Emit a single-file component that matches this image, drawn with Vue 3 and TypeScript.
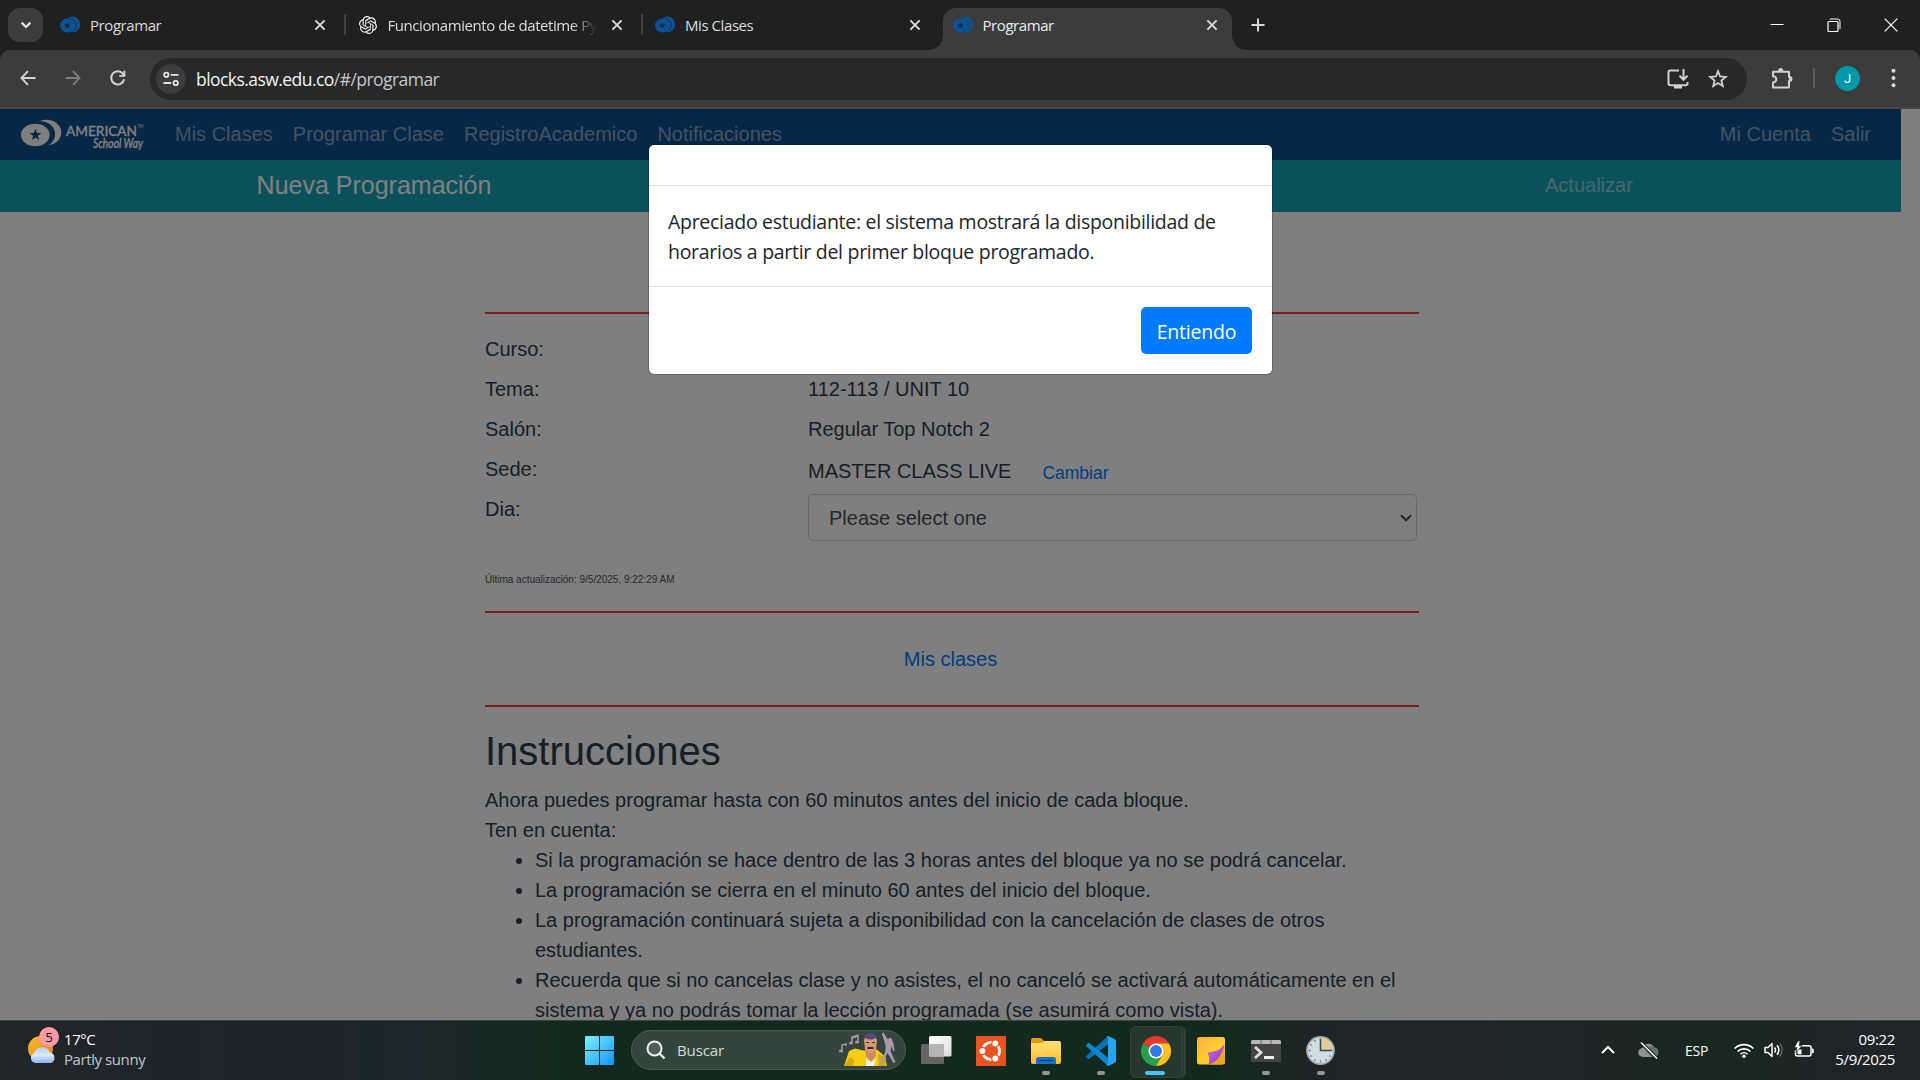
<script setup lang="ts">
interface Tab {
  title: string
  icon: 'asw' | 'gpt'
  active?: boolean
  divider?: boolean
}

const tabs: Tab[] = [
  { title: 'Programar', icon: 'asw', divider: true },
  { title: 'Funcionamiento de datetime Py', icon: 'gpt', divider: true },
  { title: 'Mis Clases', icon: 'asw' },
  { title: 'Programar', icon: 'asw', active: true },
]

const instructions: string[] = [
  'Si la programación se hace dentro de las 3 horas antes del bloque ya no se podrá cancelar.',
  'La programación se cierra en el minuto 60 antes del inicio del bloque.',
  'La programación continuará sujeta a disponibilidad con la cancelación de clases de otros estudiantes.',
  'Recuerda que si no cancelas clase y no asistes, el no canceló se activará automáticamente en el sistema y ya no podrás tomar la lección programada (se asumirá como vista).',
]
</script>

<template>
  <div class="screen">
    <header class="tabstrip">
      <button class="tab-search">
        <svg width="12" height="12" viewBox="0 0 12 12"><path d="M1.6 3.6 6 8l4.4-4.4" fill="none" stroke="#e8e8e8" stroke-width="2.2" /></svg>
      </button>
      <div v-for="(tab, i) in tabs" :key="i" class="tab" :class="{ active: tab.active, divider: tab.divider }">
        <svg v-if="tab.icon === 'asw'" class="favicon" width="20" height="18" viewBox="0 0 20 18">
          <ellipse cx="12.6" cy="8.4" rx="7.4" ry="7.9" fill="#0e5296" />
          <ellipse cx="9.4" cy="9.2" rx="7.2" ry="7.1" :fill="tab.active ? '#2b4258' : '#182f44'" />
          <ellipse cx="7.8" cy="9.5" rx="7.8" ry="6.9" fill="#0e5296" />
          <path d="m7.3 6.2.9 2.3 2.4.1-1.9 1.5.7 2.3-2.1-1.3-2 1.3.6-2.3L4 8.600l2.400-.1z" fill="#12253c" />
        </svg>
        <svg v-else class="favicon" width="18" height="18" viewBox="0 0 24 24">
          <path fill="#f1f1f1" d="M22.2819 9.8211a5.9847 5.9847 0 0 0-.5157-4.9108 6.0462 6.0462 0 0 0-6.5098-2.9A6.0651 6.0651 0 0 0 4.9807 4.1818a5.9847 5.9847 0 0 0-3.9977 2.9 6.0462 6.0462 0 0 0 .7427 7.0966 5.98 5.98 0 0 0 .511 4.9107 6.051 6.051 0 0 0 6.5146 2.9001A5.9847 5.9847 0 0 0 13.2599 24a6.0557 6.0557 0 0 0 5.7718-4.2058 5.9894 5.9894 0 0 0 3.9977-2.9001 6.0557 6.0557 0 0 0-.7475-7.0729zm-9.022 12.6081a4.4755 4.4755 0 0 1-2.8764-1.0408l.1419-.0804 4.7783-2.7582a.7948.7948 0 0 0 .3927-.6813v-6.7369l2.02 1.1686a.071.071 0 0 1 .038.0615v5.5826a4.504 4.504 0 0 1-4.4945 4.4944zm-9.6607-4.1254a4.4708 4.4708 0 0 1-.5346-3.0137l.142.0852 4.783 2.7582a.7712.7712 0 0 0 .7806 0l5.8428-3.3685v2.3324a.0804.0804 0 0 1-.0332.0615L9.74 19.9502a4.4992 4.4992 0 0 1-6.1408-1.6464zM2.3408 7.8956a4.485 4.485 0 0 1 2.3655-1.9728V11.6a.7664.7664 0 0 0 .3879.6765l5.8144 3.3543-2.0201 1.1685a.0757.0757 0 0 1-.071 0l-4.8303-2.7865A4.504 4.504 0 0 1 2.3408 7.872zm16.5963 3.8558L13.1038 8.364 15.1192 7.2a.0757.0757 0 0 1 .071 0l4.8303 2.7913a4.4944 4.4944 0 0 1-.6765 8.1042v-5.6772a.79.79 0 0 0-.407-.667zm2.0107-3.0231l-.142-.0852-4.7735-2.7818a.7759.7759 0 0 0-.7854 0L9.409 9.2297V6.8974a.0662.0662 0 0 1 .0284-.0615l4.8303-2.7866a4.4992 4.4992 0 0 1 6.6802 4.66zM8.3065 12.863l-2.02-1.1638a.0804.0804 0 0 1-.038-.0567V6.0742a4.4992 4.4992 0 0 1 7.3757-3.4537l-.142.0805L8.704 5.459a.7948.7948 0 0 0-.3927.6813zm1.0976-2.3654l2.602-1.4998 2.6069 1.4998v2.9994l-2.5974 1.4997-2.6067-1.4997Z" />
        </svg>
        <span class="tab-title" :class="{ fade: tab.icon === 'gpt' }">{{ tab.title }}</span>
        <svg class="tab-close" width="12" height="12" viewBox="0 0 12 12"><path d="m1.400 1.400 9.200 9.200M10.600 1.400l-9.200 9.200" stroke="currentColor" stroke-width="1.900" /></svg>
      </div>
      <svg class="new-tab" width="14" height="14" viewBox="0 0 14 14"><path d="M7 .5v13M.5 7h13" stroke="#d6d6d6" stroke-width="2" /></svg>
      <div class="window-buttons">
        <span><svg width="14" height="14" viewBox="0 0 14 14"><path d="M.5 6.500h13" stroke="#fff" /></svg></span>
        <span><svg width="14" height="14" viewBox="0 0 14 14"><path d="M3 1.500V1h7.500A2.500 2.500 0 0 1 13 3.500V11" fill="none" stroke="#fff" /><rect x="1" y="3.500" width="10" height="10" rx="1" fill="none" stroke="#fff" stroke-width="1.200" /></svg></span>
        <span><svg width="14" height="14" viewBox="0 0 14 14"><path d="m.7.7 12.600 12.600M13.300.7.7 13.300" stroke="#fff" stroke-width="1.200" /></svg></span>
      </div>
    </header>

    <div class="toolbar">
      <span class="tool"><svg width="16" height="16" viewBox="0 0 16 16"><path d="M15.500 8H1.500M8 1.200 1.400 8 8 14.800" fill="none" stroke="#d2d2d2" stroke-width="1.900" /></svg></span>
      <span class="tool"><svg width="16" height="16" viewBox="0 0 16 16"><path d="M.5 8h14M8 1.200 14.600 8 8 14.800" fill="none" stroke="#7c7c7c" stroke-width="1.900" /></svg></span>
      <span class="tool"><svg width="16" height="16" viewBox="0 0 16 16"><path d="M14.200 9.300A6.600 6.600 0 1 1 13 3.800l1.600 1.900" fill="none" stroke="#d2d2d2" stroke-width="2" /><path d="M15.300.8v6H9.300V4.900h4.100V.8z" fill="#d2d2d2" /></svg></span>
      <div class="omnibox">
        <span class="site-info">
          <svg width="16" height="16" viewBox="0 0 16 16" fill="none" stroke="#e3e3e3" stroke-width="1.800"><circle cx="3.300" cy="3.800" r="2.200" /><path d="M7.800 3.800h7.700M.5 12h7.700" /><circle cx="12.700" cy="12" r="2.200" /></svg>
        </span>
        <span class="url">blocks.asw.edu.co<i>/#/programar</i></span>
        <svg class="install" width="22" height="20" viewBox="0 0 22 20" fill="none" stroke="#d0d0d0" stroke-width="2"><path d="M12 1.500H3.200Q1.500 1.500 1.500 3.200v11.300q0 1.700 1.700 1.700h15.600q1.700 0 1.700-1.700V13M16.500 0v10.500M12.500 6.800l4 4 4-4" /><path d="M7 16.500h8v3H7z" fill="#d0d0d0" stroke="none" /></svg>
        <svg class="star" width="20" height="20" viewBox="0 0 20 20"><path d="m10 2.200 2.100 5.300 5.700.4-4.400 3.700 1.400 5.500-4.800-3-4.800 3 1.400-5.500L2.200 7.900l5.700-.4z" fill="none" stroke="#d0d0d0" stroke-width="1.800" /></svg>
      </div>
      <svg class="puzzle" width="21" height="22" viewBox="0 0 21 22"><path d="M2 4.700h16v5.300q2.500 0 2.500 2t-2.500 2v6.500H2v-5q3.300-.6 3.300-3.300T2 9.200z" fill="none" stroke="#d0d0d0" stroke-width="2" stroke-linejoin="round" /><path d="M7 4.500a2.700 3.500 0 0 1 5.400 0zM18 9.300a3 2.700 0 0 1 0 5.400z" fill="#d0d0d0" /></svg>
      <i class="tool-divider"></i>
      <span class="avatar">J</span>
      <svg class="dots" width="5" height="20" viewBox="0 0 5 20" fill="#d8d8d8"><circle cx="2.500" cy="2.800" r="2" /><circle cx="2.500" cy="10" r="2" /><circle cx="2.500" cy="17.200" r="2" /></svg>
    </div>

    <main class="viewport">
      <div class="page">
        <nav class="navbar">
          <svg class="brand" width="126" height="34" viewBox="0 0 126 34">
            <ellipse cx="25.500" cy="14.500" rx="14.800" ry="12.700" fill="#fff" />
            <ellipse cx="19.500" cy="16.200" rx="14.600" ry="13" fill="#0c4e8c" />
            <ellipse cx="14.300" cy="17" rx="14.300" ry="11.200" fill="#fff" />
            <path d="m14.500 10.700 1.500 4.300 4.300.1-3.400 2.600 1.200 4.300-3.600-2.500-3.600 2.500 1.200-4.300-3.400-2.600 4.300-.1z" fill="#0c4e8c" />
            <text x="45" y="17.500" font-size="14" textLength="71" lengthAdjust="spacingAndGlyphs" font-family="Lato, sans-serif" font-weight="500" fill="#fff" stroke="#fff" stroke-width=".3">AMERICAN</text>
            <text x="116.500" y="10" font-size="5" textLength="6" lengthAdjust="spacingAndGlyphs" font-family="Lato, sans-serif" fill="#fff">TM</text>
            <text x="72" y="29.500" font-size="12.500" textLength="50" lengthAdjust="spacingAndGlyphs" font-family="Lato, sans-serif" font-style="italic" fill="#fff" stroke="#fff" stroke-width=".4">School Way</text>
          </svg>
          <a>Mis Clases</a><a>Programar Clase</a><a>RegistroAcademico</a><a>Notificaciones</a>
          <a class="push">Mi Cuenta</a><a>Salir</a>
        </nav>
        <div class="subbar">
          <div class="subbar-title">Nueva Programación</div>
          <div class="subbar-action">Actualizar</div>
        </div>
        <section class="content">
          <hr />
          <dl class="details">
            <dt>Curso:</dt><dd></dd>
            <dt>Tema:</dt><dd>112-113 / UNIT 10</dd>
            <dt>Salón:</dt><dd>Regular Top Notch 2</dd>
            <dt>Sede:</dt><dd class="sede">MASTER CLASS LIVE<a>Cambiar</a></dd>
            <dt>Dia:</dt>
            <dd>
              <div class="select">
                <span>Please select one</span>
                <svg width="12" height="8" viewBox="0 0 12 8"><path d="m1 1.200 5 5 5-5" fill="none" stroke="#495057" stroke-width="2.200" /></svg>
              </div>
            </dd>
          </dl>
          <p class="updated">Última actualización: 9/5/2025, 9:22:29 AM</p>
          <hr />
          <a class="classes-link">Mis clases</a>
          <hr />
          <h2>Instrucciones</h2>
          <p>Ahora puedes programar hasta con 60 minutos antes del inicio de cada bloque.</p>
          <p>Ten en cuenta:</p>
          <ul>
            <li v-for="item in instructions" :key="item">{{ item }}</li>
          </ul>
        </section>
      </div>
      <div class="backdrop">
        <div class="modal">
          <div class="modal-header"></div>
          <div class="modal-body"><span>Apreciado estudiante: el sistema mostrará la disponibilidad de</span><span>horarios a partir del primer bloque programado.</span></div>
          <div class="modal-footer"><button class="primary">Entiendo</button></div>
        </div>
      </div>
    </main>

    <footer class="taskbar">
      <div class="weather">
        <svg width="32" height="40" viewBox="0 0 32 40">
          <defs>
            <linearGradient id="sun" x1="0" y1="0" x2="1" y2="1"><stop offset="0" stop-color="#f3bd2f" /><stop offset="1" stop-color="#ef7a10" /></linearGradient>
            <linearGradient id="cloud" x1="0" y1="0" x2="0" y2="1"><stop offset="0" stop-color="#b5cdf5" /><stop offset=".5" stop-color="#dce8fb" /><stop offset="1" stop-color="#8db2f0" /></linearGradient>
          </defs>
          <circle cx="12.500" cy="22.500" r="12.500" fill="url(#sun)" />
          <path d="M7 37a5 5 0 0 1-1-9.500 8.500 8.500 0 0 1 16-1 5.500 5.500 0 0 1 1 10.500z" fill="url(#cloud)" />
          <circle cx="21" cy="11" r="10" fill="#ff99a4" />
          <text x="21" y="16" text-anchor="middle" font-size="13.500" font-family="Open Sans, sans-serif" fill="#1d1417">5</text>
        </svg>
        <div class="weather-text"><span>17°C</span><span class="dim">Partly sunny</span></div>
      </div>

      <div class="apps">
        <svg class="start" width="29" height="29" viewBox="0 0 29 29">
          <defs><linearGradient id="win" gradientUnits="userSpaceOnUse" x1="0" y1="0" x2="29" y2="29"><stop offset="0" stop-color="#7df0ff" /><stop offset="1" stop-color="#1096fc" /></linearGradient></defs>
          <path d="M0 1q0-1 1-1h13v14H0zM15 0h13q1 0 1 1v13H15zM0 15h14v14H1q-1 0-1-1zM15 15h14v13q0 1-1 1H15z" fill="url(#win)" />
        </svg>
        <div class="search">
          <svg width="20" height="20" viewBox="0 0 20 20"><circle cx="8.500" cy="8.500" r="7" fill="#ffffff22" stroke="#eee" stroke-width="2" /><path d="m13.500 13.500 5 5" stroke="#eee" stroke-width="2.400" /></svg>
          <span>Buscar</span>
          <svg class="doodle" width="58" height="36" viewBox="0 0 58 36">
            <g fill="none" stroke="#a995ab" stroke-width="1.500"><path d="M3 19v-6l4-1v2M13 11V5l6-2v7M13 6l6-2" /></g>
            <g fill="#a995ab"><ellipse cx="2" cy="19" rx="2" ry="1.500" /><ellipse cx="12" cy="11" rx="2" ry="1.500" /><ellipse cx="18" cy="10" rx="2" ry="1.500" /></g>
            <path d="M5 34 10 19l6-2.500 8 2 14-1 8 7 2 9.500z" fill="#f6cd10" />
            <path d="m5 34 6-9 4 3-1 6zM39 22l8 3v9h-7z" fill="#dca70c" />
            <path d="M26 16h10l1 8-5 6-5-6z" fill="#c98a65" />
            <path d="m27 26 5 4 5-4-2 8h-8z" fill="#f7eee9" />
            <path d="M25 8q0-6 6-6t7 6l-1 9-4 4h-3l-4-4z" fill="#d99b76" />
            <path d="M24.500 9Q24 1 31 1t7.500 8L37 6q-5 3-11 0z" fill="#56497a" />
            <path d="M28 15.500q3.500-1.500 7 0l-.5 1.500h-6zM27 10h3v1h-3zM33 10h3v1h-3z" fill="#3f2b3a" />
            <path d="m44 0 5 7.500q1-3 3.500-1l2 5 1 7-1.500.5-1.500-5-1 5 5 11-2 1-6-10-6 12h-2l6-14v-6l-3.500-11z" fill="#a997ad" />
          </svg>
        </div>
        <span class="app"><svg width="30" height="30" viewBox="0 0 30 30"><defs><linearGradient id="tv" x1="0" y1="0" x2="1" y2="1"><stop stop-color="#fff" /><stop offset="1" stop-color="#dcdcdc" /></linearGradient></defs><rect y="8" width="23" height="20" rx="1.500" fill="#646464" /><rect x="8" width="22.500" height="20.500" rx="1.500" fill="url(#tv)" /><path d="M8 8h15v12.500H9.500Q8 20.500 8 19z" fill="#b4b4b4" /></svg></span>
        <span class="app"><svg width="30" height="30" viewBox="0 0 30 30"><path fill="#e95420" d="M0 0h30v30H0z" /><circle cx="15" cy="15" r="8.600" fill="none" stroke="#fff" stroke-width="2.800" /><g fill="#fff" stroke="#e95420" stroke-width="1.300"><circle cx="6.400" cy="15" r="3.600" /><circle cx="19.300" cy="7.500" r="3.600" /><circle cx="19.300" cy="22.500" r="3.600" /></g></svg></span>
        <span class="app running"><svg width="30" height="30" viewBox="0 0 30 30"><defs><linearGradient id="fold" x1="0" y1="0" x2="0" y2="1"><stop stop-color="#ffdf70" /><stop offset="1" stop-color="#ffbe2f" /></linearGradient></defs><path d="M0 4q0-2 2-2h8l3 3h7v5H0z" fill="#e19f05" /><path d="M0 7h11l3-2h14q2 0 2 2v19q0 2-2 2H2q-2 0-2-2z" fill="url(#fold)" /><path d="M5 28v-4q0-3 3-3h14q3 0 3 3v4z" fill="#1371c9" /><path d="M8 24.500h14" stroke="#0a3d7c" stroke-width="1.200" /></svg></span>
        <span class="app running"><svg width="30" height="30" viewBox="0 0 30 30"><path d="m22 0 .5 8L3.500 22.700q-1 .7-2-.2L.4 21.300q-.8-1 .2-1.900z" fill="#0572b8" /><path d="m22 30 .5-8L3.500 7.300q-1-.7-2 .2L.4 8.700q-.8 1 .2 1.900z" fill="#1186d0" /><path d="m22 0 7 3.200q1 .5 1 1.700v20.200q0 1.200-1 1.700L22 30l-1.500-1q1.500.3 1.500-1.500v-25Q22 .7 20.500 1z" fill="#27a5f2" /></svg></span>
        <span class="app running current"><svg width="30" height="30" viewBox="0 0 48 48"><path d="M24 24 3.200 12A24 24 0 0 1 44.800 12z" fill="#e33b2e" /><path d="M24 24 3.200 12A24 24 0 0 0 24 48l10.400-18z" fill="#2c9e4b" /><path d="M24 12h20.800A24 24 0 0 1 24 48l10.400-18z" fill="#fcc31e" /><circle cx="24" cy="24" r="12" fill="#fff" /><circle cx="24" cy="24" r="9.500" fill="#3078e8" /></svg></span>
        <span class="app"><svg width="28" height="28" viewBox="0 0 28 28"><defs><linearGradient id="note" x1="0" y1="0" x2="1" y2="1"><stop stop-color="#ffab48" /><stop offset=".5" stop-color="#fdcb32" /></linearGradient><linearGradient id="fl" x1="0" y1="0" x2="1" y2="1"><stop stop-color="#d367dc" /><stop offset="1" stop-color="#8a3bd0" /></linearGradient></defs><rect width="28" height="27.500" rx="2.500" fill="url(#note)" /><path d="M27.500 7 12 27.500h12q4 0 4-4z" fill="#eda522" /><path d="M27.500 7Q23 15 10.500 15.500q3 6 1 12Q24 24 27.500 7z" fill="url(#fl)" /></svg></span>
        <span class="app running"><svg width="30" height="22" viewBox="0 0 30 22"><rect width="30" height="22" rx="1.500" fill="#444" /><path d="M0 4V1.500Q0 0 1.500 0h27Q30 0 30 1.500V4z" fill="#b8b8b8" /><path d="M10 0v4M20 0v4" stroke="#666" /><path d="m4 7 6 5.500L4 18" fill="none" stroke="#ddd" stroke-width="2.800" /><path d="M13 16h10v3H13z" fill="#eee" /></svg></span>
        <span class="app running"><svg width="29" height="29" viewBox="0 0 29 29"><circle cx="14.500" cy="14.500" r="13.600" fill="#d2dde3" stroke="#a9a6a1" stroke-width="1.600" /><path d="M14.500 14.500V2a12.500 12.500 0 0 1 12.500 12.500z" fill="#e4cf93" /><g stroke="#5b7a90" stroke-width="1.400"><path d="M14.500 2.500v2M14.500 24.500v2M2.500 14.500h2M24.500 14.500h2M8.500 4.100l.8 1.500M4.100 8.500l1.500.8M4.100 20.500l1.500-.8M8.500 24.900l.8-1.500M20.500 24.900l-.8-1.500M24.900 20.500l-1.500-.8" /></g><path d="M14.500 3v11.500H25" fill="none" stroke="#284a63" stroke-width="1.500" /></svg></span>
      </div>

      <div class="tray">
        <svg class="chev" width="14" height="9" viewBox="0 0 14 9"><path d="m1 8 6-6 6 6" fill="none" stroke="#fff" stroke-width="2" /></svg>
        <svg class="onedrive" width="21" height="17" viewBox="0 0 21 17"><path d="M5 15a4.500 4.500 0 0 1-.5-9 6.300 6.300 0 0 1 11.800-.5A4.800 4.800 0 0 1 16 15z" fill="#8d9490" /><path d="m7 9 5-5q3-1 4.300 1.500A4.800 4.800 0 0 1 16 15h-2z" fill="#68706c" /><path d="m3 .5 16 16" stroke="#182721" stroke-width="3.500" /><path d="m3 .5 16 16" stroke="#fff" stroke-width="1.400" /></svg>
        <span class="lang">ESP</span>
        <svg class="wifi" width="20" height="15" viewBox="0 0 20 15" fill="none" stroke="#fff" stroke-width="1.600"><path d="M.7 5.500a13 13 0 0 1 18.600 0M3.600 8.500a9 9 0 0 1 12.800 0M6.500 11.200a5 5 0 0 1 7 0" /><circle cx="10" cy="13.200" r="1.700" fill="#fff" stroke="none" /></svg>
        <svg class="speaker" width="20" height="16" viewBox="0 0 20 16" fill="none" stroke="#fff" stroke-width="1.500" stroke-linejoin="round"><path d="M1 5.500h3L8 1.500v13l-4-4H1zM10.500 5.500q2 2.500 0 5M13 3.300q3.700 4.700 0 9.400" /><path d="M15.700 1.500q5 6.500 0 13" stroke="#5d6462" /></svg>
        <svg class="battery" width="20" height="17" viewBox="0 0 20 17"><path d="M7.500 4.700H15q2 0 2 2V13q0 2-2 2H3.500q-2 0-2-2V9.500" fill="none" stroke="#fff" stroke-width="1.500" /><path d="M18 7.500h.5q1.300 0 1.300 1.300v2.200q0 1.300-1.300 1.300H18z" fill="#fff" /><path d="M3.500 8.500h4v4.800H4.300l-.8-.8z" fill="#fff" /><path d="M4 0 .4 6.500H3L2 11.500l6-7H5L6 0z" fill="#fff" stroke="#1a2922" stroke-width=".6" /></svg>
        <div class="clock"><span>09:22</span><span class="date">5/9/2025</span></div>
      </div>
    </footer>
  </div>
</template>

<style>
body { margin: 0; overflow: hidden; }
</style>

<style scoped>
* { box-sizing: border-box; }
.screen { width: 1920px; height: 1080px; display: flex; flex-direction: column; overflow: hidden; font-family: "Open Sans", "Noto Sans", sans-serif; background: #1f2120; }
svg { display: block; flex: none; overflow: visible; }
button { border: 0; padding: 0; font: inherit; }

.tabstrip { height: 50px; flex: none; display: flex; align-items: flex-start; padding-left: 8px; background: #1f2120; }
.tab-search { width: 35px; height: 34px; margin-top: 8px; border-radius: 12px; background: #3c3c3c; display: flex; align-items: center; justify-content: center; margin-right: 5px; }
.tab { position: relative; width: 297.500px; height: 42px; margin-top: 8px; padding: 0 16px 0 12px; display: flex; align-items: center; color: #dcdcdc; }
.favicon { width: 20px; height: 18px; margin: 0 10px 8px 0; }
.tab-title { flex: 1; font-size: 15px; letter-spacing: -0.43px; line-height: 34px; height: 34px; margin-bottom: 8px; white-space: nowrap; margin-right: 15px; }
.tab-title.fade { -webkit-mask-image: linear-gradient(90deg, #000 calc(100% - 28px), transparent calc(100% - 2px)); margin-right: 12px; }
.tab-close { margin: 0 4px 8px 0; color: #dcdcdc; }
.tab.divider::after { content: ""; position: absolute; right: 0; top: 6px; width: 2px; height: 21px; border-radius: 1px; background: #434343; }
.tab.active { width: 289px; margin-left: 2px; padding-left: 10px; padding-right: 10px; background: #3c3c3c; border-radius: 13px 13px 0 0; color: #ececec; }
.tab.active::before, .tab.active::after { content: ""; position: absolute; bottom: 0; width: 14px; height: 14px; }
.tab.active::before { left: -14px; background: radial-gradient(circle at 0 0, transparent 13.500px, #3c3c3c 14px); }
.tab.active::after { right: -14px; background: radial-gradient(circle at 100% 0, transparent 13.500px, #3c3c3c 14px); }
.new-tab { margin: 18px 0 0 19px; }
.window-buttons { margin-left: auto; display: flex; padding-right: 1px; }
.window-buttons span { width: 57px; height: 49px; display: flex; align-items: center; justify-content: center; }

.toolbar { height: 59px; flex: none; display: flex; align-items: center; padding: 0 0 2px 5px; background: #3c3c3c; border-bottom: 2px solid #474747; border-radius: 10px 10px 0 0; }
.tool { width: 45px; display: flex; justify-content: center; }
.omnibox { width: 1597px; height: 42px; margin-left: 10px; margin-top: 3px; border-radius: 21px; background: #282828; display: flex; align-items: center; padding-left: 6px; padding-right: 19px; }
.site-info { width: 30px; height: 30px; border-radius: 50%; background: #3c3c3c; display: flex; align-items: center; justify-content: center; }
.url { margin-left: 10px; font-size: 17.500px; letter-spacing: -0.55px; color: #f3f3f3; flex: 1; }
.url i { font-style: normal; color: #c7c7c7; }
.star { margin-left: 19px; }
.puzzle { margin-left: 24px; }
.tool-divider { width: 2px; height: 20px; background: #5c5c5c; margin-left: 21px; }
.avatar { width: 25px; height: 25px; border-radius: 50%; margin: 2px 0 0 20px; background: #0097a7; color: #e8ffff; font: 13px/25px Roboto, sans-serif; text-align: center; }
.dots { margin-left: 31px; }

.viewport { position: relative; height: 911px; flex: none; overflow: hidden; background: #fff; }
.page { width: 1901px; font-family: "Liberation Sans", Arial, sans-serif; font-size: 20px; line-height: 30px; color: #2c3e50; }
.navbar { height: 51px; background: #0c4e8c; display: flex; align-items: center; padding: 0 30px 2px 21px; color: rgba(255,255,255,.5); }
.brand { margin: 2px 28px 0 0; }
.navbar a { margin-right: 20px; }
.navbar a.push { margin-left: auto; }
.navbar a:last-child { margin-right: 0; }
.subbar { height: 52px; background: #17a2b8; display: flex; align-items: center; padding-bottom: 2px; color: rgba(255,255,255,.5); }
.subbar-title { width: 748px; text-align: center; font-size: 25px; color: #fff; }
.subbar-action { margin-left: 797px; }
.content { width: 934px; margin-left: 485px; padding-top: 100px; }
hr { border: 0; height: 2px; margin: 0; background: #f23a2a; }
.details { margin: 20px 0 0; display: grid; grid-template-columns: 323px 609px; grid-template-rows: repeat(5, 40px); }
dt, dd { margin: 0; }
.sede { padding-top: 2px; display: flex; }
.sede a { font-size: 17.500px; color: #007bff; margin-left: 31px; padding-top: 2px; }
.select { height: 47px; border: 1px solid #ced4da; border-radius: 5px; display: flex; align-items: center; justify-content: space-between; padding: 0 4px 0 20px; color: #495057; }
p { margin: 0; }
.content .updated { margin-top: 30px; font-size: 10px; line-height: 15px; height: 47px; padding-top: 8px; color: #4b5157; }
.classes-link { display: block; height: 92px; line-height: 92px; padding-right: 3px; text-align: center; color: #007bff; }
h2 { margin: 20px 0 10px; font-size: 40px; line-height: 48px; font-weight: 400; }
ul { margin: 0; padding-left: 50px; }

.backdrop { position: absolute; inset: 0; background: rgba(0,0,0,.5); }
.modal { position: absolute; left: 648px; top: 35px; width: 625px; height: 231px; border: 1px solid rgba(0,0,0,.2); border-radius: 6px; background: #fff; background-clip: padding-box; color: #212529; }
.modal-header { height: 41px; border-bottom: 1px solid #dee2e6; }
.modal-body { height: 100px; padding: 21px 20px 0 19px; display: flex; flex-direction: column; font-size: 19.500px; letter-spacing: -0.29px; line-height: 30px; white-space: nowrap; }
.modal-footer { height: 88px; border-top: 1px solid #dee2e6; display: flex; justify-content: flex-end; align-items: center; padding: 0 20px; }
.primary { width: 111px; height: 47px; padding-top: 1px; border-radius: 5px; background: #007bff; color: #fff; font-size: 19.500px; letter-spacing: -0.2px; }

.taskbar { height: 60px; flex: none; display: flex; border-top: 1px solid #3b4441; color: #fff; font-size: 15px; background: linear-gradient(90deg, #202528 0, #1c242b 300px, #1a2729 430px, #14291e 560px, #14291e 1220px, #202429 1360px, #1e2527 1560px, #18271f 1700px, #1f2528 1860px, #1f2527 100%); }
.weather { width: 585px; display: flex; padding: 5px 0 0 28px; }
.weather-text { display: flex; flex-direction: column; line-height: 20px; margin-left: 4px; padding-top: 3px; letter-spacing: -0.42px; }
.weather-text .dim { color: #c4c8ca; }
.apps { display: flex; align-items: center; }
.search { width: 275px; height: 40px; margin: 0 2px 2px 17px; border-radius: 20px; background: #33463d; border: 1px solid #4a5b53; display: flex; align-items: center; padding: 0 8px 0 14px; }
.search span { margin-left: 11px; color: #d5dad7; letter-spacing: -0.1px; }
.doodle { margin-left: auto; }
.app { position: relative; width: 55px; height: 50px; display: flex; align-items: center; justify-content: center; }
.app svg { position: relative; }
.running::after { content: ""; position: absolute; bottom: 1px; left: 24px; width: 8px; height: 4px; border-radius: 2px; background: #8f9994; }
.current::before { content: ""; position: absolute; left: 2px; top: 0; width: 50px; height: 50px; border-radius: 6px; border: 1px solid #32423a; border-right: 5px double #32423a; background: #26372e; }
.current::after { left: 17px; width: 20px; background: #4cc2ff; }
.tray { margin-left: auto; display: flex; align-items: center; padding-right: 25px; }
.chev { margin-bottom: 2px; }
.onedrive { margin-left: 23px; }
.lang { margin: 0 0 1px 26px; font-size: 14px; letter-spacing: -0.2px; width: 25px; }
.wifi { margin: 0 0 1px 24px; }
.speaker { margin: 0 0 1px 10px; }
.battery { margin: 0 0 2px 10px; }
.clock { width: 81px; display: flex; flex-direction: column; text-align: right; line-height: 20px; letter-spacing: -0.35px; padding-bottom: 3px; }
</style>
